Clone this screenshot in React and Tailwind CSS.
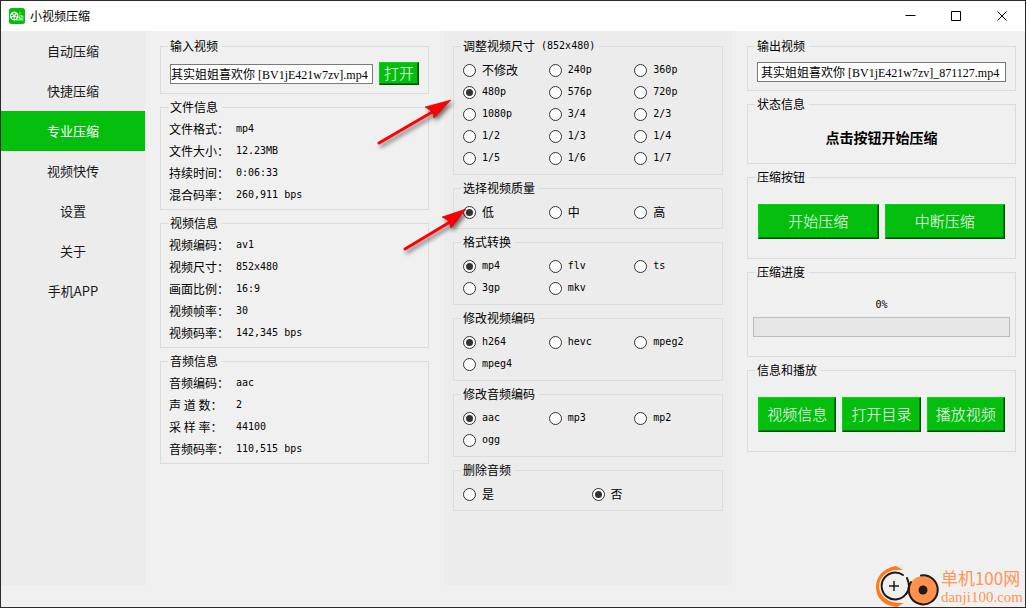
import React, { useState } from "react";

const NAV_ITEMS = ["自动压缩", "快捷压缩", "专业压缩", "视频快传", "设置", "关于", "手机APP"];

const FILE_INFO = [
  ["文件格式：", "mp4"],
  ["文件大小：", "12.23MB"],
  ["持续时间：", "0:06:33"],
  ["混合码率：", "260,911 bps"],
];

const VIDEO_INFO = [
  ["视频编码：", "av1"],
  ["视频尺寸：", "852x480"],
  ["画面比例：", "16:9"],
  ["视频帧率：", "30"],
  ["视频码率：", "142,345 bps"],
];

const AUDIO_INFO = [
  ["音频编码：", "aac"],
  ["声 道 数：", "2"],
  ["采 样 率：", "44100"],
  ["音频码率：", "110,515 bps"],
];

const SIZES = [
  "不修改", "240p", "360p",
  "480p", "576p", "720p",
  "1080p", "3/4", "2/3",
  "1/2", "1/3", "1/4",
  "1/5", "1/6", "1/7",
];

// latin text is set in a narrow mono so that two letters take one CJK cell
const LATIN = "font-['DejaVu_Sans_Mono',monospace] text-[10px]";

function Group({ title, note, children }) {
  return (
    <fieldset className="min-w-0 border border-[#dcdcdc] px-[7px]">
      <legend className="flex h-[17px] items-center pr-1 pb-[2px] pl-[2px] text-xs leading-none whitespace-pre">
        {title}
        {note && <span className={LATIN}>{note}</span>}
      </legend>
      {children}
    </fieldset>
  );
}

function InfoList({ rows }) {
  return (
    <dl className="pt-[2px] pb-[3px] pl-px">
      {rows.map(([label, value]) => (
        <div key={label} className="flex h-[22px] items-center">
          <dt className="w-[67px] whitespace-pre">{label}</dt>
          <dd className={LATIN}>{value}</dd>
        </div>
      ))}
    </dl>
  );
}

function RadioGroup({ title, note, name, options, initial, wide }) {
  const [value, setValue] = useState(initial);

  return (
    <Group title={title} note={note}>
      <div className={`-mr-[5px] grid pt-1 pb-[5px] pl-[2px] ${wide ? "grid-cols-2" : "grid-cols-3"}`}>
        {options.map((option) => (
          <label key={option} className="flex h-[22px] items-center gap-[6px]">
            <input
              type="radio"
              name={name}
              checked={value === option}
              onChange={() => setValue(option)}
              className="grid h-[13px] w-[13px] appearance-none place-items-center rounded-full border border-[#333] bg-white before:hidden before:h-[7px] before:w-[7px] before:rounded-full before:bg-[#333] checked:before:block"
            />
            <span className={/[a-z0-9]/.test(option) ? LATIN : "text-xs"}>{option}</span>
          </label>
        ))}
      </div>
    </Group>
  );
}

function GreenButton({ children, className }) {
  return (
    <button
      type="button"
      className={`border border-t-[#00d80f] border-r-[#004d05] border-b-[#004d05] border-l-[#00d80f] bg-[#04be0e] pb-[2px] text-[15px] leading-none font-light whitespace-nowrap text-white shadow-[inset_-1px_-1px_0_#02820a] ${className}`}
    >
      {children}
    </button>
  );
}

function AppIcon() {
  return (
    <svg viewBox="0 0 16 16" className="h-4 w-4">
      <rect width="16" height="16" rx="2.5" fill="#04be0e" />
      <circle cx="5.2" cy="8" r="4.3" fill="#fff" />
      <g fill="#04be0e">
        <circle cx="5.2" cy="5.7" r="1" />
        <circle cx="3" cy="7.5" r="1" />
        <circle cx="7.4" cy="7.5" r="1" />
        <circle cx="3.9" cy="10" r="1" />
        <circle cx="6.5" cy="10" r="1" />
      </g>
      <path d="M5 11.9h9.5" stroke="#fff" strokeWidth="0.8" />
      <circle cx="12" cy="9.3" r="2.4" fill="#b5ebb8" />
      <circle cx="11.3" cy="8.8" r="0.7" fill="#04be0e" />
      <circle cx="12.9" cy="9.7" r="0.7" fill="#04be0e" />
      <path d="M10 4l2.2 1-1.8 1.4z" fill="#f5c400" />
    </svg>
  );
}

function TitleBar() {
  return (
    <header className="flex h-[30px] shrink-0 items-center bg-white pl-2">
      <AppIcon />
      <h1 className="pl-[5px] text-xs">小视频压缩</h1>
      <div className="ml-auto flex">
        <button type="button" aria-label="最小化" className="grid h-[30px] w-[46px] place-items-center">
          <svg viewBox="0 0 11 11" className="h-[11px] w-[11px]" stroke="#000" fill="none">
            <path d="M0.5 4.5h10" />
          </svg>
        </button>
        <button type="button" aria-label="最大化" className="grid h-[30px] w-[46px] place-items-center">
          <svg viewBox="0 0 11 11" className="h-[11px] w-[11px]" stroke="#000" fill="none">
            <path d="M0.5 0.5h9v9h-9z" />
          </svg>
        </button>
        <button type="button" aria-label="关闭" className="grid h-[30px] w-[46px] place-items-center">
          <svg viewBox="0 0 11 11" className="h-[11px] w-[11px]" stroke="#000" fill="none">
            <path d="M0.5 0.5l9 9M9.5 0.5l-9 9" />
          </svg>
        </button>
      </div>
    </header>
  );
}

function Arrow({ shaft, head, className }) {
  return (
    <svg viewBox="0 0 80 56" className={`pointer-events-none absolute h-14 w-20 drop-shadow-[2px_3px_2px_rgba(0,0,0,0.55)] ${className}`}>
      <path d={shaft} stroke="#f00" strokeWidth="3" strokeLinecap="round" />
      <path d={head} fill="#f00" stroke="#c40000" strokeWidth="0.6" />
    </svg>
  );
}

function Watermark() {
  return (
    <div className="pointer-events-none absolute right-[2px] bottom-0 flex items-end text-[#ff9655]">
      <svg viewBox="0 0 66 44" className="h-[44px] w-[66px]" fill="none">
        <path d="M28 7L21 3C8 5 1 14 1 24c0 11 8 19 21 20l7-4C14 41 5 34 4 24 4 14 12 8 20 7z" fill="#ff7a1c" />
        <path d="M28 12A13.5 13.5 0 1 0 31 31" stroke="#231815" strokeWidth="2" strokeLinecap="round" />
        <path d="M19 18v10M14 23h10" stroke="#231815" strokeWidth="1.5" />
        <circle cx="48" cy="27" r="14" fill="#ff914d" />
        <path d="M46 12.5A14.5 14.5 0 1 1 36 19" stroke="#231815" strokeWidth="2" strokeLinecap="round" />
        <path d="M32 15c1 3 2 5 2 8s-1 6-3 8" stroke="#231815" strokeWidth="2" strokeLinecap="round" />
        <circle cx="48" cy="27" r="4.5" fill="#231815" />
      </svg>
      <div className="pb-px">
        <p className="text-[17px] leading-[20px]">单机100网</p>
        <p className="font-['Liberation_Serif',serif] text-[15px] leading-[18px]">danji100.com</p>
      </div>
    </div>
  );
}

export default function App() {
  const [active, setActive] = useState("专业压缩");
  const [output, setOutput] = useState("其实姐姐喜欢你 [BV1jE421w7zv]_871127.mp4");

  return (
    <div className="relative flex min-h-screen flex-col overflow-hidden border border-[#2b2b2b] bg-[#f0f0f0] font-['Noto_Sans_CJK_SC',sans-serif] text-xs text-black">
      <TitleBar />

      <div className="flex flex-1 pb-[22px]">
        {/* Sidebar */}
        <nav className="w-36 shrink-0 bg-[#ececec]">
          {NAV_ITEMS.map((item) => (
            <button
              key={item}
              type="button"
              onClick={() => setActive(item)}
              className={`block h-10 w-full text-[13px] ${active === item ? "bg-[#04be0e] text-white" : "text-[#1a1a1a]"}`}
            >
              {item}
            </button>
          ))}
        </nav>

        <main className="grid flex-1 grid-cols-[299fr_288fr_293fr]">
          {/* Source file */}
          <section className="flex min-w-0 flex-col gap-[5px] px-[15px] pt-[7px]">
            <Group title="输入视频">
              <div className="flex items-center gap-[6px] pt-[7px] pr-[2px] pb-2 pl-[2px]">
                <input
                  type="text"
                  aria-label="输入视频"
                  readOnly
                  value="其实姐姐喜欢你 [BV1jE421w7zv].mp4"
                  className="h-5 min-w-0 flex-1 border border-[#7a7a7a] bg-white font-['Liberation_Serif','Noto_Sans_CJK_SC',serif] text-xs"
                />
                <GreenButton className="h-[23px] w-10">打开</GreenButton>
              </div>
            </Group>
            <Group title="文件信息">
              <InfoList rows={FILE_INFO} />
            </Group>
            <Group title="视频信息">
              <InfoList rows={VIDEO_INFO} />
            </Group>
            <Group title="音频信息">
              <InfoList rows={AUDIO_INFO} />
            </Group>
          </section>

          {/* Compression options */}
          <section className="flex min-w-0 flex-col gap-[5px] bg-[#ececec] px-[9px] pt-[7px]">
            <RadioGroup title="调整视频尺寸" note=" (852x480)" name="size" options={SIZES} initial="480p" />
            <RadioGroup title="选择视频质量" name="quality" options={["低", "中", "高"]} initial="低" />
            <RadioGroup title="格式转换" name="format" options={["mp4", "flv", "ts", "3gp", "mkv"]} initial="mp4" />
            <RadioGroup title="修改视频编码" name="vcodec" options={["h264", "hevc", "mpeg2", "mpeg4"]} initial="h264" />
            <RadioGroup title="修改音频编码" name="acodec" options={["aac", "mp3", "mp2", "ogg"]} initial="aac" />
            <RadioGroup title="删除音频" name="mute" options={["是", "否"]} initial="否" wide />
          </section>

          {/* Output and progress */}
          <section className="flex min-w-0 flex-col gap-[5px] pt-[7px] pr-[9px] pl-[15px]">
            <Group title="输出视频">
              <div className="flex pt-[7px] pr-[2px] pb-2 pl-[2px]">
                <input
                  type="text"
                  aria-label="输出视频"
                  value={output}
                  onChange={(e) => setOutput(e.target.value)}
                  className="h-5 w-full border border-[#7a7a7a] bg-white px-[3px] font-['Liberation_Serif','Noto_Sans_CJK_SC',serif] text-xs"
                />
              </div>
            </Group>
            <Group title="状态信息">
              <p className="grid h-[50px] place-items-center pb-[2px] text-sm font-bold">点击按钮开始压缩</p>
            </Group>
            <Group title="压缩按钮">
              <div className="grid grid-cols-2 gap-[6px] px-[3px] pt-[18px] pb-[19px]">
                <GreenButton className="h-[35px]">开始压缩</GreenButton>
                <GreenButton className="h-[35px]">中断压缩</GreenButton>
              </div>
            </Group>
            <Group title="压缩进度">
              <p className={`-mx-[2px] pt-4 text-center leading-4 ${LATIN}`}>0%</p>
              <div role="progressbar" aria-label="压缩进度" aria-valuenow={0} className="-mx-[2px] mt-1 mb-[19px] h-5 border border-[#bcbcbc] bg-[#e6e6e6]" />
            </Group>
            <Group title="信息和播放">
              <div className="grid grid-cols-3 gap-[6px] px-[3px] pt-[18px] pb-[19px]">
                <GreenButton className="h-[35px]">视频信息</GreenButton>
                <GreenButton className="h-[35px]">打开目录</GreenButton>
                <GreenButton className="h-[35px]">播放视频</GreenButton>
              </div>
            </Group>
          </section>
        </main>
      </div>

      <Arrow shaft="M3 46L58 14" head="M75 3L49 10l8 5 1 6z" className="top-[96px] left-[375px]" />
      <Arrow shaft="M3 45L48 18" head="M64 5L40 13l7 4 2 7z" className="top-[203px] left-[401px]" />
      <Watermark />
    </div>
  );
}
